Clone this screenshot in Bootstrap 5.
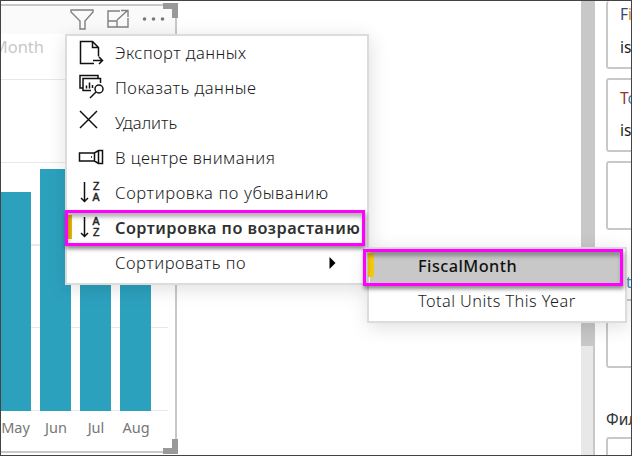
<!DOCTYPE html>
<html lang="ru">
<head>
<meta charset="utf-8">
<title>Сортировка</title>
<link href="https://cdn.jsdelivr.net/npm/bootstrap@5.3.0/dist/css/bootstrap.min.css" rel="stylesheet">
<style>
body{width:632px;height:456px;font-family:"Noto Sans","Open Sans",sans-serif;color:#1c1c1c;background:#fff}
.frame{width:632px;height:456px;border:1px solid #444}
.visual{width:176px;height:449px;margin-top:3px;border:2px solid #c8c8c8;border-left:0}
.vhead{height:28px;background:#fafafa;padding-left:69px;color:#777}
.vtitle{height:45px;width:43px;font-size:16.5px;line-height:26px;color:#c8c8c8;direction:rtl;white-space:nowrap}
.plot{height:332px;width:167px;gap:9px;background:repeating-linear-gradient(#e8e8e8 0 1px,transparent 1px 82.75px)}
.vbar{width:31px;background:#2ca1be}
.h1x{height:219px;width:30px}.h2x{height:242px}.h3x{height:230px}.h4x{height:226px}
.months{height:34px;font-size:14.5px;line-height:33px;color:#777}
.months span{width:40px;text-align:center}
.months span:first-child{width:29px;margin-right:6px}
.corner{width:15px;height:15px;border:solid #999;right:-3px}
.ct{top:-3px;border-width:6px 6px 0 0}
.cb{bottom:-3px;border-width:0 6px 6px 0}
.track{width:14px;background:#e8e8e8;border-right:2px solid #c8c8c8}
.thumb{width:14px;height:345px;background:#c8c8c8}
.pane{width:36px;padding-left:11px;font-size:15.5px}
.fcard{width:80px;border:2px solid #c8c8c8;border-radius:3px;flex:none;padding-left:12px;line-height:20px}
.sheet{background:#fff;border:2px solid #dcdcdc;box-shadow:1px 4px 18px rgba(0,0,0,.13);font-size:16.6px}
.main-menu{left:65px;top:34px;width:304px;height:251px;z-index:2}
.sub-menu{left:367px;top:247px;width:260px;height:76px;z-index:3}
.entry{height:35px;line-height:34px;white-space:nowrap}
.entry svg{width:48px;height:34px;flex:none;fill:none;stroke:#111;stroke-width:1.5}
.entry svg text{font:10.5px "Liberation Sans",sans-serif;letter-spacing:0;fill:#222;stroke:#222;stroke-width:.5}
.sub-menu .entry{padding-left:49px;font-size:16.3px;letter-spacing:.45px}
.ls-a{letter-spacing:.44px}.ls-b{letter-spacing:.5px}.ls-c{letter-spacing:.62px}
.light-type{font-weight:360}
.strong{font-size:16.3px;letter-spacing:.46px;font-weight:600;color:#303030}
.hl{border:3px solid #f0f;box-shadow:1px 3px 4px rgba(0,0,0,.45),inset 1px 4px 4px rgba(0,0,0,.3);z-index:4}
.hl1{left:65px;top:210px;width:300px;height:36px}
.hl2{left:363px;top:249px;width:260px;height:37px}
.mark1{left:1px;top:179px;width:4px;height:24px;background:#e8b80c}
.mark2{left:-1px;top:4px;width:6px;height:24px;background:#f2c811}
.chosen{background:#c8c8c8;width:252px;margin-left:1px}
.sub-menu .chosen{padding-left:48px;color:#111;font-weight:550;line-height:34px}
</style>
<script src="https://cdn.jsdelivr.net/npm/bootstrap@5.3.0/dist/js/bootstrap.bundle.min.js"></script>
</head>
<body class="m-0 overflow-hidden position-relative">
<div class="frame d-flex justify-content-between overflow-hidden">
  <section class="visual position-relative">
    <div class="vhead">
      <svg width="104" height="28" fill="none" stroke="#808080" stroke-width="1.4">
        <path d="M1 4h22v2l-8 9v8h-5v-8l-9-9z"/>
        <path d="M50 5H38v16h20v-9M38 15h9v6M47 14l10-9M51 4.500h7V11"/>
        <g fill="#777" stroke="none"><circle cx="74.500" cy="13" r="1.800"/><circle cx="83.500" cy="13" r="1.800"/><circle cx="92.500" cy="13" r="1.800"/></g>
      </svg>
    </div>
    <div class="vtitle"><span dir="ltr">Month</span></div>
    <div class="plot d-flex align-items-end"><div class="vbar h1x"></div><div class="vbar h2x"></div><div class="vbar h3x"></div><div class="vbar h4x"></div></div>
    <div class="months d-flex"><span>May</span><span>Jun</span><span>Jul</span><span>Aug</span></div>
    <div class="corner ct position-absolute"></div><div class="corner cb position-absolute"></div>
  </section>
  <div class="d-flex">
    <div class="track"><div class="thumb"></div></div>
    <aside class="pane d-flex flex-column overflow-hidden">
      <div class="fcard" style="height:68px;border-top:0"><div style="color:#344878;padding-top:3px">F<span style="color:#d58a2c">i</span></div><div style="padding-top:13px">is</div></div>
      <div class="fcard" style="height:74px;margin-top:9px"><div style="color:#983028;padding-top:8px">T<span style="color:#357caf">o</span></div><div style="padding-top:12px">is</div></div>
      <div class="fcard" style="height:69px;margin-top:9px"></div>
      <div class="flex-shrink-0 text-nowrap" style="height:69px;padding:41px 0 0 20px;color:#4a8fca">t<span style="color:#d9a23c">e</span></div>
      <div class="fcard" style="height:69px"></div>
      <div class="flex-shrink-0 text-nowrap" style="height:69px;padding-top:40px;color:#333">Фильтры</div>
      <div class="fcard" style="height:60px"></div>
    </aside>
  </div>
</div>

<div class="sheet main-menu position-absolute light-type">
  <div class="entry d-flex ls-a"><svg><path d="M16 27.500h-2.500V5.500h12l6 6v9M25.500 5.500v6h6M13.500 27.500H27M26 24.500h9.500M32 21l3.500 3.500L32 28"/></svg><span>Экспорт данных</span></div>
  <div class="entry d-flex ls-b"><svg><path d="M16 17h-3V4.500h18V8M24 19.500h-8V7.500h17.500V12M19.500 17.500v-3M22.500 17.500v-6M25.500 17v-3"/><circle cx="32" cy="18" r="4"/><path d="m29 21-6 6"/></svg><span>Показать данные</span></div>
  <div class="entry d-flex"><svg><path d="m13 5 17 17M30 5 13 22"/></svg><span>Удалить</span></div>
  <div class="entry d-flex ls-a"><svg><path d="M12.500 12h15l4-2.500h4v13h-4l-4-2.500h-15zM27.500 12v8M31.500 9.500v13"/><path d="M24 16h1"/></svg><span>В центре внимания</span></div>
  <div class="entry d-flex ls-c"><svg><path d="M17.500 6v19M14 22l3.500 3.500L21 22"/><text x="26" y="14">Z</text><text x="25.500" y="25">A</text></svg><span>Сортировка по убыванию</span></div>
  <div class="entry d-flex strong"><svg><path d="M17.500 6v19M14 22l3.500 3.500L21 22"/><text x="25.500" y="14">A</text><text x="26" y="25">Z</text></svg><span>Сортировка по возрастанию</span></div>
  <div class="entry d-flex ls-b"><svg></svg><span>Сортировать по</span><svg class="ms-auto"><path d="M10.500 11v12l6-6z" fill="#000" stroke="none"/></svg></div>
  <div class="mark1 position-absolute"></div>
</div>
<div class="sheet sub-menu position-absolute light-type">
  <div class="entry chosen"><span>FiscalMonth</span></div>
  <div class="entry"><span>Total Units This Year</span></div>
  <div class="mark2 position-absolute"></div>
</div>
<div class="hl hl1 position-absolute"></div>
<div class="hl hl2 position-absolute"></div>
</body>
</html>
